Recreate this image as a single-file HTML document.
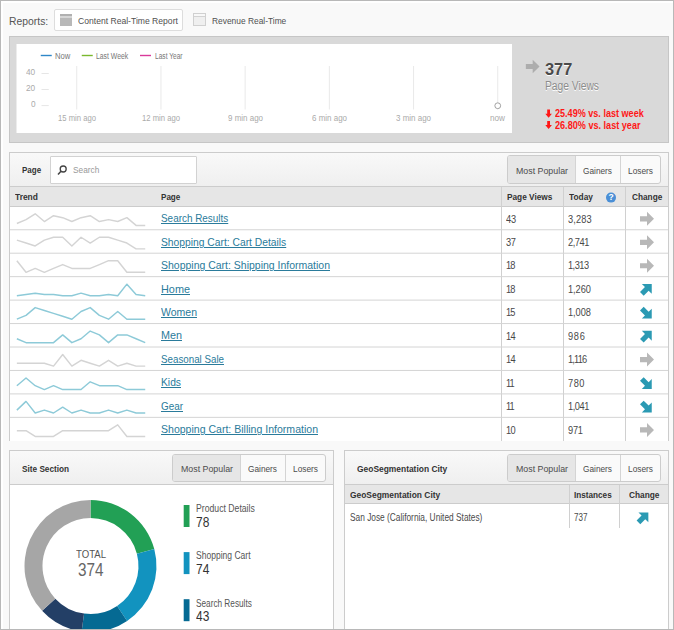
<!DOCTYPE html>
<html><head><meta charset="utf-8"><title>Real-Time Reports</title>
<style>
html,body{margin:0;padding:0;background:#f9f9f9;}
body{width:674px;height:630px;overflow:hidden;position:relative;font-family:"Liberation Sans", sans-serif;}
#frame{position:absolute;left:0;top:0;width:672px;height:628px;border:1px solid #b8b8b8;background:#f9f9f9;box-shadow:inset 2px 2px 0 #fff;overflow:hidden;}
#abs{position:absolute;left:-1px;top:-1px;width:674px;height:630px;}
.t{position:absolute;white-space:nowrap;line-height:1;transform-origin:0 50%;display:block;text-decoration:none;}
a.lnk{text-decoration:underline;text-decoration-thickness:0.9px;text-underline-offset:1.2px;}
.box{position:absolute;box-sizing:border-box;}
.tb1{left:54px;top:9px;width:129px;height:22px;background:#fff;border:1px solid #ddd;border-radius:2px;}
.rt{left:9px;top:36px;width:660px;height:107px;background:#d9d9d9;border:1px solid #c6c6c6;}
.chart{left:16px;top:44px;width:496px;height:89px;background:#fff;border-left:1px solid #ececec;}
.panel{background:#fff;border:1px solid #ccc;}
.ph{position:absolute;left:0;right:0;top:0;background:linear-gradient(#f9f9f9,#efefef);border-bottom:1px solid #ccc;}
.th{position:absolute;left:0;right:0;background:#e6e6e6;border-bottom:1px solid #ccc;}
.rl{position:absolute;left:0;right:0;height:1px;background:#d6d6d6;}
.vl{position:absolute;width:1px;background:#d0d0d0;}
.bg{position:absolute;display:flex;box-sizing:border-box;border:1px solid #ccc;border-radius:3px;overflow:hidden;background:#fafafa;}
.bg .b{box-sizing:border-box;border-right:1px solid #d4d4d4;height:100%;}
.bg .b:last-child{border-right:0;}
.bg .b.on{background:#e6e6e6;}
.inp{left:50px;top:156px;width:147px;height:28px;background:#fff;border:1px solid #d2d2d2;border-radius:1px;}
svg{position:absolute;left:0;top:0;}
</style></head><body>
<div id="frame"><div id="abs">
<div class="box tb1"></div>
<div class="box" style="left:60px;top:13.7px;width:12.2px;height:12.1px;background:linear-gradient(#b0b0b0 0,#b0b0b0 2.3px,#d6d6d6 2.3px,#d6d6d6 4px,#b8b8b8 4px)"></div>
<div class="box" style="left:193px;top:13px;width:13px;height:13px;border:1px solid #d0d0d0;background:linear-gradient(#f8f8f8 0,#f8f8f8 2.2px,#d2d2d2 2.2px,#d2d2d2 3.2px,#efefef 3.2px)"></div>
<div class="box rt"></div>
<div class="box chart"></div>

<div class="box panel" style="left:9px;top:152px;width:660px;height:289px;border-bottom:0">
  <div class="ph" style="height:33px"></div>
  <div class="th" style="top:34px;height:19px"></div>
  <div class="vl" style="left:491px;top:34px;bottom:0"></div>
  <div class="vl" style="left:553px;top:34px;bottom:0"></div>
  <div class="vl" style="left:615px;top:34px;bottom:0"></div>
</div>
<div class="box inp"></div>
<div class="bg" style="left:507px;top:155px;height:29px"><div class="b on" style="width:68px"></div><div class="b" style="width:45px"></div><div class="b" style="width:39px"></div></div>

<div class="box panel" style="left:9px;top:450px;width:325px;height:200px">
  <div class="ph" style="height:33px"></div>
</div>
<div class="bg" style="left:172px;top:454px;height:28px"><div class="b on" style="width:68px"></div><div class="b" style="width:45px"></div><div class="b" style="width:39px"></div></div>

<div class="box panel" style="left:344px;top:450px;width:325px;height:200px">
  <div class="ph" style="height:33px"></div>
  <div class="th" style="top:34px;height:18px"></div>
  <div class="vl" style="left:224px;top:34px;height:43px"></div>
  <div class="vl" style="left:274px;top:34px;height:43px"></div>
</div>
<div class="bg" style="left:507px;top:454px;height:28px"><div class="b on" style="width:68px"></div><div class="b" style="width:45px"></div><div class="b" style="width:39px"></div></div>

<svg width="674" height="630" viewBox="0 0 674 630">
<line x1="10" x2="668" y1="229.75" y2="229.75" stroke="#d4d4d4" stroke-width="1"/><line x1="10" x2="668" y1="253.2" y2="253.2" stroke="#d4d4d4" stroke-width="1"/><line x1="10" x2="668" y1="276.65" y2="276.65" stroke="#d4d4d4" stroke-width="1"/><line x1="10" x2="668" y1="300.1" y2="300.1" stroke="#d4d4d4" stroke-width="1"/><line x1="10" x2="668" y1="323.55" y2="323.55" stroke="#d4d4d4" stroke-width="1"/><line x1="10" x2="668" y1="347.0" y2="347.0" stroke="#d4d4d4" stroke-width="1"/><line x1="10" x2="668" y1="370.45" y2="370.45" stroke="#d4d4d4" stroke-width="1"/><line x1="10" x2="668" y1="393.9" y2="393.9" stroke="#d4d4d4" stroke-width="1"/><line x1="10" x2="668" y1="417.35" y2="417.35" stroke="#d4d4d4" stroke-width="1"/>
<polyline points="16.85,223.47 26.02,219.60 35.19,213.80 44.36,221.53 53.53,215.73 62.70,217.67 71.87,221.53 81.04,217.67 90.21,215.73 99.38,221.53 108.55,219.60 117.72,221.53 126.89,217.67 136.06,225.40 145.23,225.40" fill="none" stroke="#d4d4d4" stroke-width="1.45" stroke-linejoin="round"/>
<path d="M-7,-2.6H0V-7L7,0L0,7V2.6H-7Z" transform="translate(647.00,218.83)" fill="#b8b8b8"/>
<polyline points="16.85,240.15 26.02,243.05 35.19,245.95 44.36,240.15 53.53,237.25 62.70,237.25 71.87,245.95 81.04,237.25 90.21,243.05 99.38,237.25 108.55,237.25 117.72,240.15 126.89,243.05 136.06,248.85 145.23,248.85" fill="none" stroke="#d4d4d4" stroke-width="1.45" stroke-linejoin="round"/>
<path d="M-7,-2.6H0V-7L7,0L0,7V2.6H-7Z" transform="translate(647.00,242.28)" fill="#b8b8b8"/>
<polyline points="16.85,260.70 26.02,272.30 35.19,268.43 44.36,272.30 53.53,268.43 62.70,264.57 71.87,268.43 81.04,268.43 90.21,268.43 99.38,264.57 108.55,260.70 117.72,260.70 126.89,272.30 136.06,272.30 145.23,272.30" fill="none" stroke="#d4d4d4" stroke-width="1.45" stroke-linejoin="round"/>
<path d="M-7,-2.6H0V-7L7,0L0,7V2.6H-7Z" transform="translate(647.00,265.73)" fill="#b8b8b8"/>
<polyline points="16.85,295.75 26.02,294.46 35.19,293.17 44.36,294.46 53.53,294.46 62.70,295.75 71.87,295.75 81.04,293.17 90.21,295.75 99.38,295.75 108.55,294.46 117.72,295.75 126.89,284.15 136.06,294.46 145.23,295.75" fill="none" stroke="#8dcad8" stroke-width="1.45" stroke-linejoin="round"/>
<path d="M-7,-2.6H0V-7L7,0L0,7V2.6H-7Z" transform="translate(646.80,288.88) rotate(-45)" fill="#2b9ab3"/>
<polyline points="16.85,319.20 26.02,315.33 35.19,307.60 44.36,310.50 53.53,313.40 62.70,316.30 71.87,319.20 81.04,311.47 90.21,307.60 99.38,315.33 108.55,319.20 117.72,311.47 126.89,319.20 136.06,319.20 145.23,319.20" fill="none" stroke="#8dcad8" stroke-width="1.45" stroke-linejoin="round"/>
<path d="M-7,-2.6H0V-7L7,0L0,7V2.6H-7Z" transform="translate(646.80,313.63) rotate(45)" fill="#2b9ab3"/>
<polyline points="16.85,338.78 26.02,342.65 35.19,342.65 44.36,342.65 53.53,342.65 62.70,334.92 71.87,342.65 81.04,338.78 90.21,331.05 99.38,334.92 108.55,342.65 117.72,334.92 126.89,334.92 136.06,338.78 145.23,342.65" fill="none" stroke="#8dcad8" stroke-width="1.45" stroke-linejoin="round"/>
<path d="M-7,-2.6H0V-7L7,0L0,7V2.6H-7Z" transform="translate(646.80,335.78) rotate(-45)" fill="#2b9ab3"/>
<polyline points="16.85,363.20 26.02,363.20 35.19,363.20 44.36,363.20 53.53,366.10 62.70,354.50 71.87,366.10 81.04,360.30 90.21,363.20 99.38,366.10 108.55,360.30 117.72,366.10 126.89,363.20 136.06,366.10 145.23,366.10" fill="none" stroke="#d4d4d4" stroke-width="1.45" stroke-linejoin="round"/>
<path d="M-7,-2.6H0V-7L7,0L0,7V2.6H-7Z" transform="translate(647.00,359.53)" fill="#b8b8b8"/>
<polyline points="16.85,385.68 26.02,377.95 35.19,385.68 44.36,389.55 53.53,385.68 62.70,389.55 71.87,389.55 81.04,389.55 90.21,381.82 99.38,385.68 108.55,385.68 117.72,385.68 126.89,389.55 136.06,389.55 145.23,389.55" fill="none" stroke="#8dcad8" stroke-width="1.45" stroke-linejoin="round"/>
<path d="M-7,-2.6H0V-7L7,0L0,7V2.6H-7Z" transform="translate(646.80,383.98) rotate(45)" fill="#2b9ab3"/>
<polyline points="16.85,410.10 26.02,401.40 35.19,413.00 44.36,410.10 53.53,413.00 62.70,407.20 71.87,413.00 81.04,410.10 90.21,413.00 99.38,413.00 108.55,410.10 117.72,413.00 126.89,410.10 136.06,413.00 145.23,413.00" fill="none" stroke="#8dcad8" stroke-width="1.45" stroke-linejoin="round"/>
<path d="M-7,-2.6H0V-7L7,0L0,7V2.6H-7Z" transform="translate(646.80,407.43) rotate(45)" fill="#2b9ab3"/>
<polyline points="16.85,430.65 26.02,430.65 35.19,436.45 44.36,436.45 53.53,436.45 62.70,430.65 71.87,430.65 81.04,430.65 90.21,430.65 99.38,430.65 108.55,430.65 117.72,424.85 126.89,436.45 136.06,436.45 145.23,436.45" fill="none" stroke="#d4d4d4" stroke-width="1.45" stroke-linejoin="round"/>
<path d="M-7,-2.6H0V-7L7,0L0,7V2.6H-7Z" transform="translate(647.00,429.88)" fill="#b8b8b8"/>
<path d="M-7,-2.6H0V-7L7,0L0,7V2.6H-7Z" transform="translate(643.40,517.40) rotate(-45)" fill="#2b9ab3"/>
<path d="M-7,-2.6H0V-7L7,0L0,7V2.6H-7Z" transform="translate(532.7,66.5) scale(0.98,0.95)" fill="#adadad"/>
<path d="M-1.4,-8H1.4V-3.8H3.3L0,0.2L-3.3,-3.8H-1.4Z" transform="translate(548.6,117.50)" fill="#ff1616"/>
<path d="M-1.4,-8H1.4V-3.8H3.3L0,0.2L-3.3,-3.8H-1.4Z" transform="translate(548.6,128.90)" fill="#ff1616"/>
<line x1="76.75" y1="66" x2="76.75" y2="109.5" stroke="#e9e9e9" stroke-width="1"/>
<line x1="160.95" y1="66" x2="160.95" y2="109.5" stroke="#e9e9e9" stroke-width="1"/>
<line x1="245.15" y1="66" x2="245.15" y2="109.5" stroke="#e9e9e9" stroke-width="1"/>
<line x1="329.35" y1="66" x2="329.35" y2="109.5" stroke="#e9e9e9" stroke-width="1"/>
<line x1="413.55" y1="66" x2="413.55" y2="109.5" stroke="#e9e9e9" stroke-width="1"/>
<line x1="497.75" y1="66" x2="497.75" y2="109.5" stroke="#e9e9e9" stroke-width="1"/>
<line x1="41.5" y1="73.5" x2="48.75" y2="73.5" stroke="#e6e6e6" stroke-width="1"/>
<line x1="41.5" y1="89.5" x2="48.75" y2="89.5" stroke="#e6e6e6" stroke-width="1"/>
<line x1="41.5" y1="105.6" x2="48.75" y2="105.6" stroke="#e6e6e6" stroke-width="1"/>
<circle cx="497.75" cy="105.75" r="2.9" fill="#fff" stroke="#999" stroke-width="0.9"/>
<line x1="40.75" y1="55.5" x2="51.75" y2="55.5" stroke="#2e87c8" stroke-width="1.4"/>
<line x1="81.75" y1="55.5" x2="92.75" y2="55.5" stroke="#7ab82e" stroke-width="1.4"/>
<line x1="140" y1="55.5" x2="151" y2="55.5" stroke="#d93a9a" stroke-width="1.4"/>
<circle cx="611" cy="197.6" r="5" fill="#4a8fd6"/>
<circle cx="63.2" cy="169.0" r="3" fill="none" stroke="#444" stroke-width="1.3"/><line x1="61.0" y1="171.3" x2="58.0" y2="174.5" stroke="#444" stroke-width="1.5"/>
<path d="M90.50,500.00A66,66 0 0 1 154.27,549.01L136.88,553.64A48,48 0 0 0 90.50,518.00Z" fill="#22a055"/>
<path d="M154.27,549.01A66,66 0 0 1 127.11,620.92L117.13,605.94A48,48 0 0 0 136.88,553.64Z" fill="#1293bf"/>
<path d="M127.11,620.92A66,66 0 0 1 81.66,631.40L84.07,613.57A48,48 0 0 0 117.13,605.94Z" fill="#056a93"/>
<path d="M81.66,631.40A66,66 0 0 1 42.10,610.87L55.30,598.63A48,48 0 0 0 84.07,613.57Z" fill="#233f66"/>
<path d="M42.10,610.87A66,66 0 0 1 90.50,500.00L90.50,518.00A48,48 0 0 0 55.30,598.63Z" fill="#a6a6a6"/>
<rect x="183.7" y="505.0" width="5.8" height="22" fill="#22a055"/>
<rect x="183.7" y="552.1" width="5.8" height="22" fill="#1293bf"/>
<rect x="183.7" y="599.2" width="5.8" height="22" fill="#056a93"/>
</svg>
<span class="t" style="left:608.6px;top:193.4px;font-size:8.5px;font-weight:bold;color:#fff">?</span>
<span class="t" style="left:9.20px;top:15.67px;font-size:11.5px;color:#555;transform:scaleX(0.9018);">Reports:</span>
<span class="t" style="left:77.90px;top:16.26px;font-size:9.5px;color:#505050;transform:scaleX(0.9038);">Content Real-Time Report</span>
<span class="t" style="left:211.75px;top:16.26px;font-size:9.5px;color:#505050;transform:scaleX(0.8830);">Revenue Real-Time</span>
<span class="t" style="left:55.20px;top:52.10px;font-size:8.5px;color:#777;transform:scaleX(0.8962);">Now</span>
<span class="t" style="left:96.10px;top:52.10px;font-size:8.5px;color:#777;transform:scaleX(0.8059);">Last Week</span>
<span class="t" style="left:154.60px;top:52.10px;font-size:8.5px;color:#777;transform:scaleX(0.7757);">Last Year</span>
<span class="t" style="left:26.00px;top:66.96px;font-size:9.5px;color:#aaa;transform:scaleX(0.8744);">40</span>
<span class="t" style="left:26.00px;top:83.16px;font-size:9.5px;color:#aaa;transform:scaleX(0.8744);">20</span>
<span class="t" style="left:30.65px;top:98.96px;font-size:9.5px;color:#aaa;transform:scaleX(0.8684);">0</span>
<span class="t" style="left:57.85px;top:113.26px;font-size:9.5px;color:#aaa;transform:scaleX(0.8082);">15 min ago</span>
<span class="t" style="left:142.05px;top:113.26px;font-size:9.5px;color:#aaa;transform:scaleX(0.8082);">12 min ago</span>
<span class="t" style="left:227.75px;top:113.26px;font-size:9.5px;color:#aaa;transform:scaleX(0.8386);">9 min ago</span>
<span class="t" style="left:311.95px;top:113.26px;font-size:9.5px;color:#aaa;transform:scaleX(0.8386);">6 min ago</span>
<span class="t" style="left:396.15px;top:113.26px;font-size:9.5px;color:#aaa;transform:scaleX(0.8386);">3 min ago</span>
<span class="t" style="left:489.60px;top:113.26px;font-size:9.5px;color:#aaa;transform:scaleX(0.8602);">now</span>
<span class="t" style="left:545.00px;top:61.66px;font-size:16px;color:#4a4a4a;transform:scaleX(1.0205);font-weight:bold;text-shadow:0 1px 0 #fff;">377</span>
<span class="t" style="left:545.00px;top:79.84px;font-size:12px;color:#8c8c8c;transform:scaleX(0.8550);text-shadow:0 1px 0 #fff;">Page Views</span>
<span class="t" style="left:554.75px;top:108.11px;font-size:10.5px;color:#ff1616;transform:scaleX(0.8637);font-weight:bold;">25.49% vs. last week</span>
<span class="t" style="left:554.75px;top:119.71px;font-size:10.5px;color:#ff1616;transform:scaleX(0.8665);font-weight:bold;">26.80% vs. last year</span>
<span class="t" style="left:21.60px;top:165.98px;font-size:9px;color:#333;transform:scaleX(0.8877);font-weight:bold;">Page</span>
<span class="t" style="left:73.25px;top:165.36px;font-size:9.5px;color:#999;transform:scaleX(0.8718);">Search</span>
<span class="t" style="left:516.00px;top:165.96px;font-size:9.5px;color:#4c4c4c;transform:scaleX(0.9288);">Most Popular</span>
<span class="t" style="left:582.80px;top:165.96px;font-size:9.5px;color:#4c4c4c;transform:scaleX(0.8718);">Gainers</span>
<span class="t" style="left:627.90px;top:165.96px;font-size:9.5px;color:#4c4c4c;transform:scaleX(0.8767);">Losers</span>
<span class="t" style="left:14.90px;top:193.08px;font-size:9px;color:#333;transform:scaleX(0.9341);font-weight:bold;">Trend</span>
<span class="t" style="left:160.60px;top:193.08px;font-size:9px;color:#333;transform:scaleX(0.8970);font-weight:bold;">Page</span>
<span class="t" style="left:506.60px;top:193.08px;font-size:9px;color:#333;transform:scaleX(0.9175);font-weight:bold;">Page Views</span>
<span class="t" style="left:568.70px;top:193.08px;font-size:9px;color:#333;transform:scaleX(0.9248);font-weight:bold;">Today</span>
<span class="t" style="left:631.60px;top:193.08px;font-size:9px;color:#333;transform:scaleX(0.9177);font-weight:bold;">Change</span>
<a class="t lnk" style="left:161.00px;top:213.17px;font-size:11.5px;color:#2a7b9b;transform:scaleX(0.8624);">Search Results</a>
<span class="t" style="left:506.10px;top:213.59px;font-size:11px;color:#484848;transform:scaleX(0.8400);letter-spacing:-0.113px;">43</span>
<span class="t" style="left:568.00px;top:213.59px;font-size:11px;color:#484848;transform:scaleX(0.8400);letter-spacing:0.149px;">3,283</span>
<a class="t lnk" style="left:161.00px;top:236.62px;font-size:11.5px;color:#2a7b9b;transform:scaleX(0.8947);">Shopping Cart: Cart Details</a>
<span class="t" style="left:506.10px;top:237.04px;font-size:11px;color:#484848;transform:scaleX(0.8400);letter-spacing:-0.411px;">37</span>
<span class="t" style="left:568.00px;top:237.04px;font-size:11px;color:#484848;transform:scaleX(0.8400);letter-spacing:-0.506px;">2,741</span>
<a class="t lnk" style="left:161.00px;top:260.07px;font-size:11.5px;color:#2a7b9b;transform:scaleX(0.9115);">Shopping Cart: Shipping Information</a>
<span class="t" style="left:506.10px;top:260.49px;font-size:11px;color:#484848;transform:scaleX(0.8400);letter-spacing:-0.946px;">18</span>
<span class="t" style="left:568.00px;top:260.49px;font-size:11px;color:#484848;transform:scaleX(0.8400);letter-spacing:-0.625px;">1,313</span>
<a class="t lnk" style="left:161.00px;top:283.52px;font-size:11.5px;color:#2a7b9b;transform:scaleX(0.9450);">Home</a>
<span class="t" style="left:506.10px;top:283.94px;font-size:11px;color:#484848;transform:scaleX(0.8400);letter-spacing:-0.946px;">18</span>
<span class="t" style="left:568.00px;top:283.94px;font-size:11px;color:#484848;transform:scaleX(0.8400);letter-spacing:-0.054px;">1,260</span>
<a class="t lnk" style="left:161.00px;top:306.97px;font-size:11.5px;color:#2a7b9b;transform:scaleX(0.9132);">Women</a>
<span class="t" style="left:506.10px;top:307.39px;font-size:11px;color:#484848;transform:scaleX(0.8400);letter-spacing:-0.946px;">15</span>
<span class="t" style="left:568.00px;top:307.39px;font-size:11px;color:#484848;transform:scaleX(0.8400);letter-spacing:-0.054px;">1,008</span>
<a class="t lnk" style="left:161.00px;top:330.42px;font-size:11.5px;color:#2a7b9b;transform:scaleX(0.9385);">Men</a>
<span class="t" style="left:506.10px;top:330.84px;font-size:11px;color:#484848;transform:scaleX(0.8400);letter-spacing:-0.768px;">14</span>
<span class="t" style="left:568.00px;top:330.84px;font-size:11px;color:#484848;transform:scaleX(0.8400);letter-spacing:0.825px;">986</span>
<a class="t lnk" style="left:161.00px;top:353.87px;font-size:11.5px;color:#2a7b9b;transform:scaleX(0.8494);">Seasonal Sale</a>
<span class="t" style="left:506.10px;top:354.29px;font-size:11px;color:#484848;transform:scaleX(0.8400);letter-spacing:-0.768px;">14</span>
<span class="t" style="left:568.00px;top:354.29px;font-size:11px;color:#484848;transform:scaleX(0.8400);letter-spacing:-0.987px;">1,116</span>
<a class="t lnk" style="left:161.00px;top:377.32px;font-size:11.5px;color:#2a7b9b;transform:scaleX(0.8939);">Kids</a>
<span class="t" style="left:506.10px;top:377.74px;font-size:11px;color:#484848;transform:scaleX(0.8400);letter-spacing:-1.187px;">11</span>
<span class="t" style="left:568.00px;top:377.74px;font-size:11px;color:#484848;transform:scaleX(0.8400);letter-spacing:0.587px;">780</span>
<a class="t lnk" style="left:161.00px;top:400.77px;font-size:11.5px;color:#2a7b9b;transform:scaleX(0.8601);">Gear</a>
<span class="t" style="left:506.10px;top:401.19px;font-size:11px;color:#484848;transform:scaleX(0.8400);letter-spacing:-1.187px;">11</span>
<span class="t" style="left:568.00px;top:401.19px;font-size:11px;color:#484848;transform:scaleX(0.8400);letter-spacing:-0.506px;">1,041</span>
<a class="t lnk" style="left:161.00px;top:424.22px;font-size:11.5px;color:#2a7b9b;transform:scaleX(0.9164);">Shopping Cart: Billing Information</a>
<span class="t" style="left:506.10px;top:424.64px;font-size:11px;color:#484848;transform:scaleX(0.8400);letter-spacing:-0.768px;">10</span>
<span class="t" style="left:568.00px;top:424.64px;font-size:11px;color:#484848;transform:scaleX(0.8400);letter-spacing:-0.286px;">971</span>
<span class="t" style="left:21.60px;top:464.68px;font-size:9px;color:#333;transform:scaleX(0.9143);font-weight:bold;">Site Section</span>
<span class="t" style="left:181.00px;top:463.76px;font-size:9.5px;color:#4c4c4c;transform:scaleX(0.9288);">Most Popular</span>
<span class="t" style="left:247.80px;top:463.76px;font-size:9.5px;color:#4c4c4c;transform:scaleX(0.8718);">Gainers</span>
<span class="t" style="left:292.90px;top:463.76px;font-size:9.5px;color:#4c4c4c;transform:scaleX(0.8767);">Losers</span>
<span class="t" style="left:75.50px;top:549.29px;font-size:11px;color:#555;transform:scaleX(0.8711);">TOTAL</span>
<span class="t" style="left:77.70px;top:560.76px;font-size:18px;color:#666;transform:scaleX(0.8520);">374</span>
<span class="t" style="left:196.40px;top:504.14px;font-size:10px;color:#555;transform:scaleX(0.8671);">Product Details</span>
<span class="t" style="left:196.20px;top:514.55px;font-size:14px;color:#333;transform:scaleX(0.8538);">78</span>
<span class="t" style="left:196.40px;top:551.33px;font-size:10px;color:#555;transform:scaleX(0.8524);">Shopping Cart</span>
<span class="t" style="left:196.20px;top:561.75px;font-size:14px;color:#333;transform:scaleX(0.8538);">74</span>
<span class="t" style="left:196.40px;top:598.53px;font-size:10px;color:#555;transform:scaleX(0.8229);">Search Results</span>
<span class="t" style="left:196.20px;top:608.95px;font-size:14px;color:#333;transform:scaleX(0.8538);">43</span>
<span class="t" style="left:356.60px;top:464.68px;font-size:9px;color:#333;transform:scaleX(0.9356);font-weight:bold;">GeoSegmentation City</span>
<span class="t" style="left:515.90px;top:463.76px;font-size:9.5px;color:#4c4c4c;transform:scaleX(0.9288);">Most Popular</span>
<span class="t" style="left:582.70px;top:463.76px;font-size:9.5px;color:#4c4c4c;transform:scaleX(0.8718);">Gainers</span>
<span class="t" style="left:627.80px;top:463.76px;font-size:9.5px;color:#4c4c4c;transform:scaleX(0.8767);">Losers</span>
<span class="t" style="left:349.60px;top:491.38px;font-size:9px;color:#333;transform:scaleX(0.9346);font-weight:bold;">GeoSegmentation City</span>
<span class="t" style="left:574.40px;top:491.38px;font-size:9px;color:#333;transform:scaleX(0.9078);font-weight:bold;">Instances</span>
<span class="t" style="left:628.70px;top:491.38px;font-size:9px;color:#333;transform:scaleX(0.9238);font-weight:bold;">Change</span>
<span class="t" style="left:350.00px;top:511.81px;font-size:10.5px;color:#4a4a4a;transform:scaleX(0.7932);">San Jose (California, United States)</span>
<span class="t" style="left:574.20px;top:511.81px;font-size:10.5px;color:#4a4a4a;transform:scaleX(0.7701);">737</span>
</div></div>
</body></html>
